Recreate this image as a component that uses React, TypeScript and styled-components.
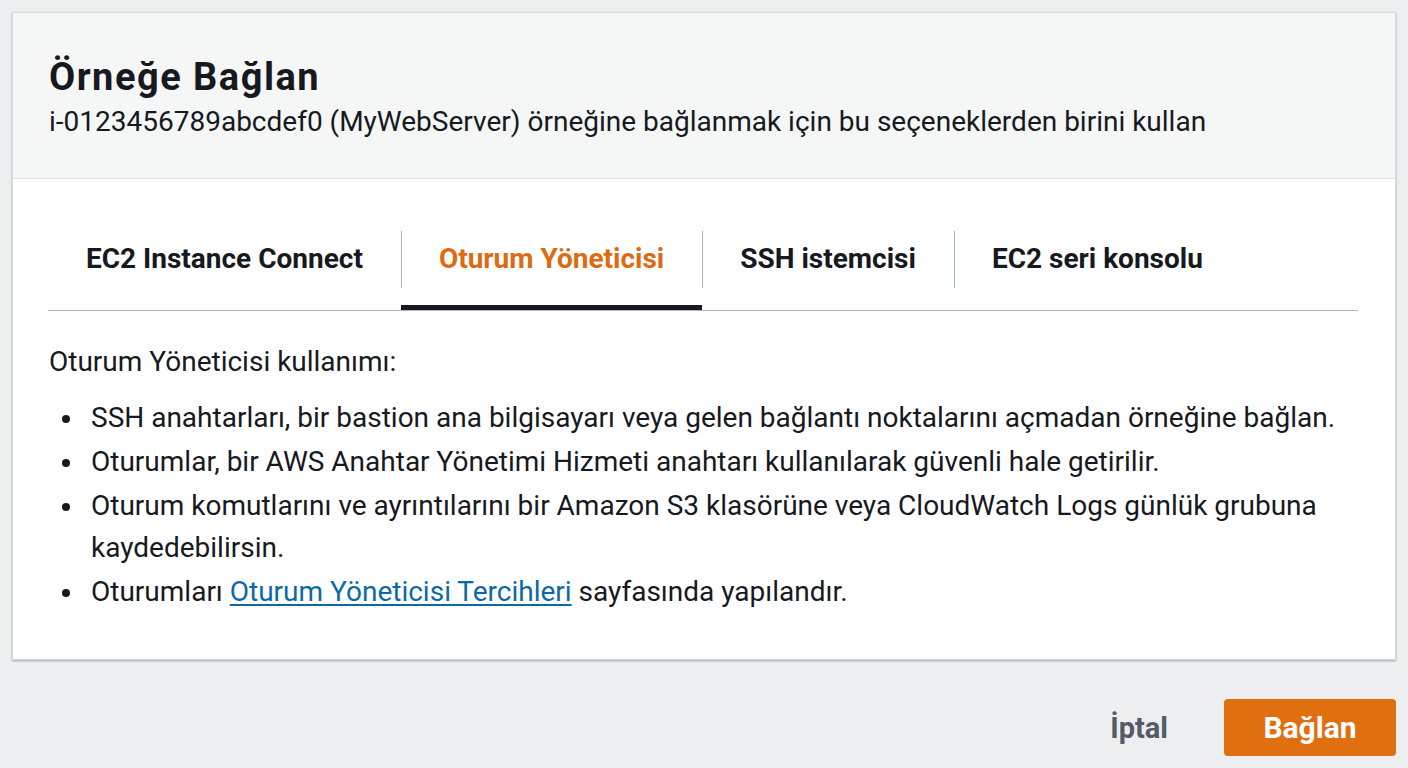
import React, { useState } from "react";
import styled, { createGlobalStyle } from "styled-components";

const GlobalStyle = createGlobalStyle`
	html, body {
		margin: 0;
		padding: 0;
		background: #eceeef;
	}
	body {
		font-family: Roboto, "Noto Sans", sans-serif;
		color: #16191f;
	}
`;

const Page = styled.div`
	width: 1408px;
	height: 768px;
	box-sizing: border-box;
	padding: 12px 12px 0 12px;
	display: flex;
	flex-direction: column;
	overflow: hidden;
`;

const Card = styled.div`
	background: #fff;
	border: 1px solid #d5dbdb;
	box-shadow: 0 1px 2px rgba(0, 22, 40, 0.35);
	height: 648px;
	box-sizing: border-box;
	display: flex;
	flex-direction: column;
`;

const Header = styled.div`
	background: #f5f6f6;
	border-bottom: 1px solid #e2e4e4;
	height: 166px;
	box-sizing: border-box;
	padding: 42px 36px 0 36px;
`;

const Title = styled.h2`
	margin: 0;
	font-size: 38px;
	line-height: 44px;
	font-weight: 700;
	letter-spacing: 1.5px;
	color: #16191f;
`;

const Subtitle = styled.div`
	margin-top: 5px;
	font-size: 28px;
	line-height: 36px;
	color: #16191f;
`;

const TabList = styled.div`
	margin: 40px 37px 0 35px;
	display: flex;
	align-items: stretch;
	border-bottom: 1px solid #aab7b8;
	height: 92px;
	box-sizing: border-box;
`;

const Tab = styled.button<{ $active?: boolean; $first?: boolean }>`
	position: relative;
	background: none;
	border: none;
	padding: 0 38px 12px 38px;
	font-family: inherit;
	font-size: 28px;
	font-weight: 700;
	color: ${(p) => (p.$active ? "#dc6b12" : "#16191f")};
	cursor: pointer;
	display: flex;
	align-items: center;

	&::before {
		content: "";
		display: ${(p) => (p.$first ? "none" : "block")};
		position: absolute;
		left: 0;
		top: 12px;
		height: 57px;
		width: 1px;
		background: #aab7b8;
	}

	&::after {
		content: "";
		display: ${(p) => (p.$active ? "block" : "none")};
		position: absolute;
		left: 0;
		right: 0;
		bottom: 0;
		height: 5px;
		background: #16191f;
	}
`;

const Body = styled.div`
	padding: 30px 36px 0 36px;
	font-size: 28px;
	line-height: 42px;
	color: #16191f;
`;

const Lead = styled.p`
	margin: 0 0 14px 0;
`;

const List = styled.ul`
	margin: 0;
	padding: 0;
	list-style: none;
`;

const Item = styled.li`
	position: relative;
	padding-left: 42px;
	margin-bottom: 2px;

	&::before {
		content: "";
		position: absolute;
		left: 13px;
		top: 18px;
		width: 8px;
		height: 8px;
		border-radius: 50%;
		background: #16191f;
	}
`;

const Link = styled.a`
	color: #0b6aa6;
	text-decoration: underline;
	text-underline-offset: 3px;
	cursor: pointer;
`;

const Footer = styled.div`
	display: flex;
	justify-content: flex-end;
	align-items: center;
	gap: 56px;
	padding-top: 39px;
`;

const TextButton = styled.button`
	background: none;
	border: none;
	font-family: inherit;
	font-size: 29px;
	font-weight: 700;
	color: #545b64;
	padding: 0;
	cursor: pointer;
`;

const PrimaryButton = styled.button`
	width: 172px;
	height: 57px;
	background: #e0700f;
	border: none;
	border-radius: 4px;
	color: #fff;
	font-family: inherit;
	font-size: 30px;
	font-weight: 700;
	cursor: pointer;
`;

const tabs = ["EC2 Instance Connect", "Oturum Yöneticisi", "SSH istemcisi", "EC2 seri konsolu"];

export default function App() {
	const [active, setActive] = useState(1);

	return (
		<Page>
			<GlobalStyle />
			<Card>
				<Header>
					<Title>Örneğe Bağlan</Title>
					<Subtitle>
						i-0123456789abcdef0 (MyWebServer) örneğine bağlanmak için bu seçeneklerden birini kullan
					</Subtitle>
				</Header>
				<TabList>
					{tabs.map((t, i) => (
						<Tab key={t} $active={i === active} $first={i === 0} onClick={() => setActive(i)}>
							{t}
						</Tab>
					))}
				</TabList>
				<Body>
					<Lead>Oturum Yöneticisi kullanımı:</Lead>
					<List>
						<Item>SSH anahtarları, bir bastion ana bilgisayarı veya gelen bağlantı noktalarını açmadan örneğine bağlan.</Item>
						<Item>Oturumlar, bir AWS Anahtar Yönetimi Hizmeti anahtarı kullanılarak güvenli hale getirilir.</Item>
						<Item>
							Oturum komutlarını ve ayrıntılarını bir Amazon S3 klasörüne veya CloudWatch Logs günlük grubuna
							kaydedebilirsin.
						</Item>
						<Item>
							Oturumları <Link>Oturum Yöneticisi Tercihleri</Link> sayfasında yapılandır.
						</Item>
					</List>
				</Body>
			</Card>
			<Footer>
				<TextButton>İptal</TextButton>
				<PrimaryButton>Bağlan</PrimaryButton>
			</Footer>
		</Page>
	);
}
